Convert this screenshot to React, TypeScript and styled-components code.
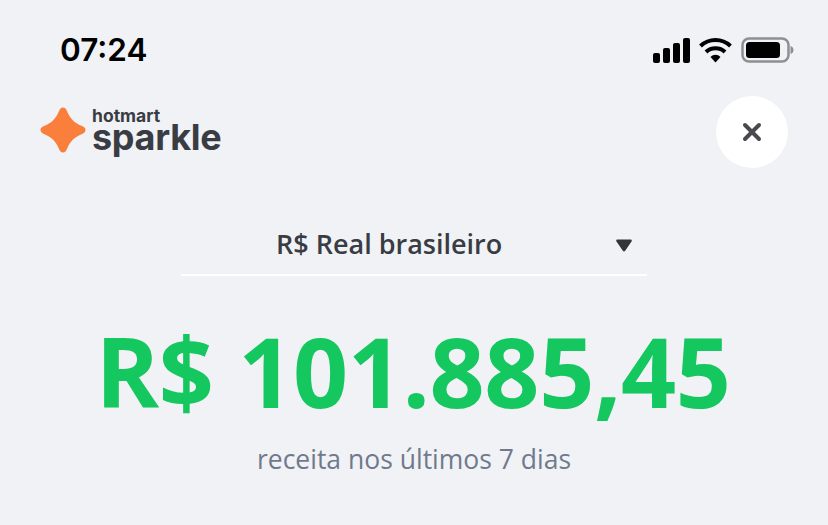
import React from "react";
import styled, { createGlobalStyle } from "styled-components";

const Global = createGlobalStyle`
  html, body { margin: 0; padding: 0; background: #f0f2f6; }
  body { font-family: "Open Sans", "Noto Sans", sans-serif; }
`;

const Screen = styled.div`
  width: 828px;
  height: 525px;
  overflow: hidden;
  background: #f0f2f6;
  display: flex;
  flex-direction: column;
`;

const StatusBar = styled.div`
  height: 96px;
  box-sizing: border-box;
  padding: 32px 34px 0 60px;
  display: flex;
  justify-content: space-between;
  align-items: flex-start;
`;

const Time = styled.span`
  font-family: Inter, sans-serif;
  font-size: 31.5px;
  line-height: 36px;
  font-weight: 600;
  color: #000;
`;

const StatusIcons = styled.div`
  display: flex;
  align-items: center;
  height: 36px;
`;

const Header = styled.div`
  height: 72px;
  box-sizing: border-box;
  padding: 0 40px;
  display: flex;
  justify-content: space-between;
  align-items: center;
`;

const Brand = styled.div`
  display: flex;
  align-items: center;
  gap: 6px;
  margin-top: -4px;
`;

const BrandText = styled.div`
  display: flex;
  flex-direction: column;
  color: #393c43;
  font-family: Inter, sans-serif;
`;

const BrandTop = styled.span`
  font-size: 17.5px;
  line-height: 15px;
  font-weight: 700;
`;

const BrandName = styled.span`
  font-size: 36px;
  line-height: 29px;
  font-weight: 700;
  letter-spacing: -0.3px;
`;

const CloseButton = styled.button`
  width: 72px;
  height: 72px;
  border: 0;
  padding: 0;
  border-radius: 50%;
  background: #fff;
  display: flex;
  align-items: center;
  justify-content: center;
`;

const Main = styled.div`
  display: flex;
  flex-direction: column;
  align-items: center;
  padding-top: 48px;
`;

const Select = styled.div`
  width: 466px;
  height: 60px;
  box-sizing: border-box;
  border-bottom: 2px solid #fff;
  display: flex;
  align-items: center;
  justify-content: space-between;
  padding: 0 15px 0 95px;
`;

const SelectLabel = styled.span`
  font-size: 27px;
  line-height: 32px;
  font-weight: 600;
  color: #393c43;
  margin-top: -3px;
`;

const Amount = styled.div`
  margin-top: 35px;
  margin-left: -2px;
  font-size: 96.5px;
  line-height: 120px;
  font-weight: 700;
  color: #14c75f;
  letter-spacing: -0.4px;
`;

const Caption = styled.div`
  margin-top: 11px;
  font-size: 26.5px;
  line-height: 34px;
  color: #707a8c;
`;

export default function App() {
  return (
    <Screen>
      <Global />
      <StatusBar>
        <Time>07:24</Time>
        <StatusIcons>
          <svg width="141" height="26" viewBox="0 0 141 26">
            <g fill="#000">
              <rect x="0" y="16" width="7" height="10" rx="2" />
              <rect x="10" y="11" width="7" height="15" rx="2" />
              <rect x="20" y="6" width="7" height="20" rx="2" />
              <rect x="30" y="1" width="7" height="25" rx="2" />
            </g>
            <g fill="none" stroke="#000" strokeWidth="4">
              <path d="M47.5 9 C56 1, 69 1, 77.5 9" />
              <path d="M53 15 C58 10, 67 10, 72 15" />
            </g>
            <path d="M57.5 20 C60.5 17, 64.5 17, 67.5 20 L62.5 25.5 Z" fill="#000" />
            <rect x="89.5" y="1.5" width="46" height="23" rx="6.5" fill="none" stroke="#8d8f92" strokeWidth="2.5" />
            <rect x="93" y="5" width="34" height="16" rx="3.5" fill="#000" />
            <path d="M137.5 9 C140 10, 140.5 11.5, 140.5 13 C140.5 14.5, 140 16, 137.5 17 Z" fill="#8d8f92" />
          </svg>
        </StatusIcons>
      </StatusBar>
      <Header>
        <Brand>
          <svg width="46" height="46" viewBox="0 0 46 46">
            <path d="M23 0.5 C25 0.5 26.2 2 27.2 4.5 C30 11.5 34.5 16 41.5 18.8 C44 19.8 45.5 21 45.5 23 C45.5 25 44 26.2 41.5 27.2 C34.5 30 30 34.5 27.2 41.5 C26.2 44 25 45.5 23 45.5 C21 45.5 19.8 44 18.8 41.5 C16 34.5 11.5 30 4.5 27.2 C2 26.2 0.5 25 0.5 23 C0.5 21 2 19.8 4.5 18.8 C11.5 16 16 11.5 18.8 4.5 C19.8 2 21 0.5 23 0.5 Z" fill="#fb7f3c" />
          </svg>
          <BrandText>
            <BrandTop>hotmart</BrandTop>
            <BrandName>sparkle</BrandName>
          </BrandText>
        </Brand>
        <CloseButton aria-label="Fechar">
          <svg width="20" height="20" viewBox="0 0 20 20">
            <path d="M3 3 L17 17 M17 3 L3 17" stroke="#484a4f" strokeWidth="4" strokeLinecap="round" />
          </svg>
        </CloseButton>
      </Header>
      <Main>
        <Select>
          <SelectLabel>R$ Real brasileiro</SelectLabel>
          <svg width="16" height="13" viewBox="0 0 16 13">
            <path d="M1.5 0.5 H14.5 C15.6 0.5 16.2 1.6 15.5 2.6 L9.2 11.8 C8.6 12.6 7.4 12.6 6.8 11.8 L0.5 2.6 C-0.2 1.6 0.4 0.5 1.5 0.5 Z" fill="#333539" />
          </svg>
        </Select>
        <Amount>R$ 101.885,45</Amount>
        <Caption>receita nos últimos 7 dias</Caption>
      </Main>
    </Screen>
  );
}
